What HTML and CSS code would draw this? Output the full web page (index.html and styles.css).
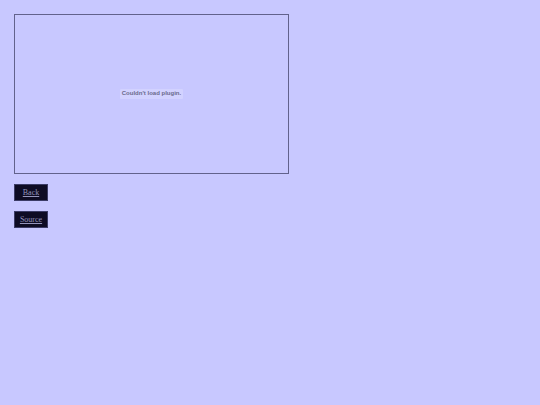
FILE: index.html
```html
<!DOCTYPE html>
<html>
<head>
<meta charset="utf-8">
<link rel="stylesheet" href="styles.css">
</head>
<body>
<div class="page">
  <div class="plugin">
    <span class="msg">Couldn't load plugin.</span>
  </div>
  <a class="btn" href="#">Back</a>
  <a class="btn" href="#">Source</a>
</div>
</body>
</html>
```
FILE: styles.css
```css
html, body {
  margin: 0;
  padding: 0;
  background: #c8c8ff;
}
.page {
  padding: 14px;
  display: flex;
  flex-direction: column;
  align-items: flex-start;
  gap: 10px;
}
.plugin {
  width: 273px;
  height: 158px;
  border: 1px solid #62628c;
  display: flex;
  align-items: center;
  justify-content: center;
}
.msg {
  font-family: "Liberation Sans", Arial, sans-serif;
  font-weight: bold;
  font-size: 6px;
  line-height: 7px;
  color: #6a6a8c;
  background: #d2d2ff;
  padding: 1px 2px 2px;
  border-radius: 1px;
}
.btn {
  display: flex;
  align-items: center;
  justify-content: center;
  width: 32px;
  height: 15px;
  border: 1px solid #3c3c66;
  background: #0e0c24;
  color: #9494bc;
  font-family: "Liberation Serif", "Times New Roman", serif;
  font-size: 8px;
  text-decoration: underline;
}
```
